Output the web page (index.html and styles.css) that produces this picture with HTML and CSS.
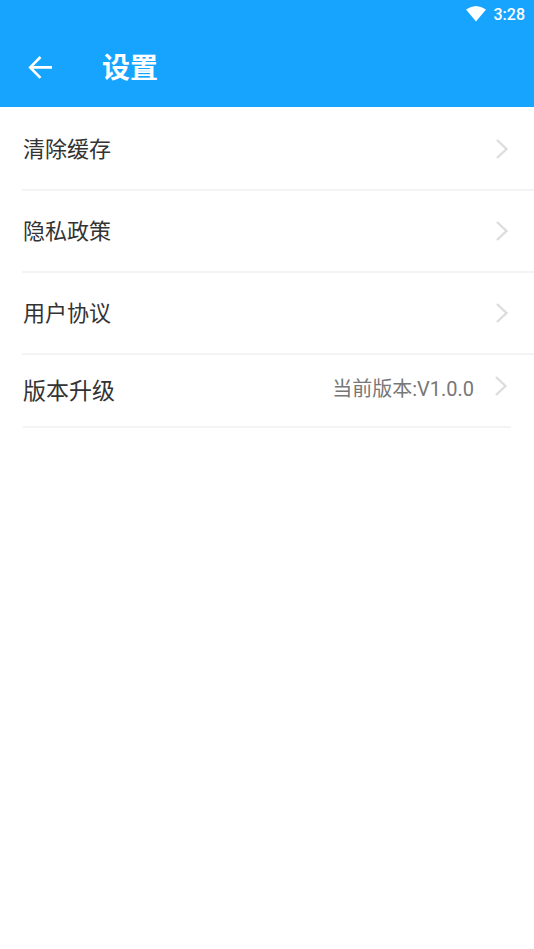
FILE: index.html
```html
<!DOCTYPE html>
<html lang="zh-CN">
<head>
<meta charset="utf-8">
<meta name="viewport" content="width=device-width, initial-scale=1">
<title>设置</title>
<link rel="stylesheet" href="styles.css">
</head>
<body>
<header class="header">
  <div class="status">
    <svg class="wifi" viewBox="0 0 20 16" aria-hidden="true"><path d="M0 3.6Q10 -3.6 20 3.6L10 15.4Z"/></svg>
    <span class="time">3:28</span>
  </div>
  <div class="toolbar">
    <button class="back" type="button" aria-label="返回"><svg viewBox="0 0 24 24" aria-hidden="true"><path d="M24 12.4H3M12.5 2L2.2 12.4L12.5 22.8"/></svg></button>
    <h1 class="title">设置</h1>
  </div>
</header>
<main class="list">
  <a class="row" href="#cache"><span class="label">清除缓存</span><svg class="chevron" viewBox="0 0 12 20" aria-hidden="true"><path d="M1 1L10.5 10L1 19"/></svg></a>
  <a class="row" href="#privacy"><span class="label">隐私政策</span><svg class="chevron" viewBox="0 0 12 20" aria-hidden="true"><path d="M1 1L10.5 10L1 19"/></svg></a>
  <a class="row" href="#terms"><span class="label">用户协议</span><svg class="chevron" viewBox="0 0 12 20" aria-hidden="true"><path d="M1 1L10.5 10L1 19"/></svg></a>
  <a class="row version" href="#upgrade"><span class="label">版本升级</span><span class="value">当前版本:V1.0.0</span><svg class="chevron" viewBox="0 0 12 20" aria-hidden="true"><path d="M1 1L10.5 10L1 19"/></svg></a>
</main>
</body>
</html>
```
FILE: styles.css
```css
* { box-sizing: border-box; }
body {
  margin: 0;
  background: #fff;
  color: #333;
  font-family: Roboto, "Noto Sans CJK SC", sans-serif;
}
.header { background: #16a4ff; color: #fff; }
.status {
  display: flex;
  align-items: center;
  justify-content: flex-end;
  gap: 8px;
  height: 27px;
  padding-right: 9px;
  font-size: 16px;
  font-weight: 500;
}
.wifi { width: 20px; height: 16px; fill: #fff; }
.time { padding-top: 2px; }
.toolbar {
  display: flex;
  align-items: center;
  gap: 50px;
  height: 80px;
  padding-left: 28px;
}
.back {
  display: flex;
  padding: 0;
  border: 0;
  background: none;
}
.back svg { width: 24px; height: 24px; fill: none; stroke: #fff; stroke-width: 2.6; }
.title { margin: 0; padding-top: 4px; font-size: 28px; font-weight: 700; line-height: 40px; }
.list { padding: 2px 0 0 22px; }
.row {
  display: flex;
  align-items: center;
  justify-content: space-between;
  min-height: 82px;
  padding-right: 26px;
  border-bottom: 2px solid #f4f4f4;
  color: inherit;
  text-decoration: none;
}
.label { padding-top: 2px; font-size: 22px; line-height: 32px; }
.chevron { flex: none; width: 12px; height: 20px; fill: none; stroke: #ddd; stroke-width: 2.4; }
.version {
  align-items: flex-start;
  gap: 21px;
  min-height: 73px;
  margin: 0 23px 0 1px;
  padding: 18px 4px 0 0;
}
.version .label { margin-right: auto; font-size: 23px; }
.row:not(.version) .label { padding-left: 1px; }
.version .label { padding-top: 3px; }
.value { padding-top: 2px; color: #777; font-size: 20px; line-height: 28px; }
.version .chevron { margin-top: 3px; }
```
